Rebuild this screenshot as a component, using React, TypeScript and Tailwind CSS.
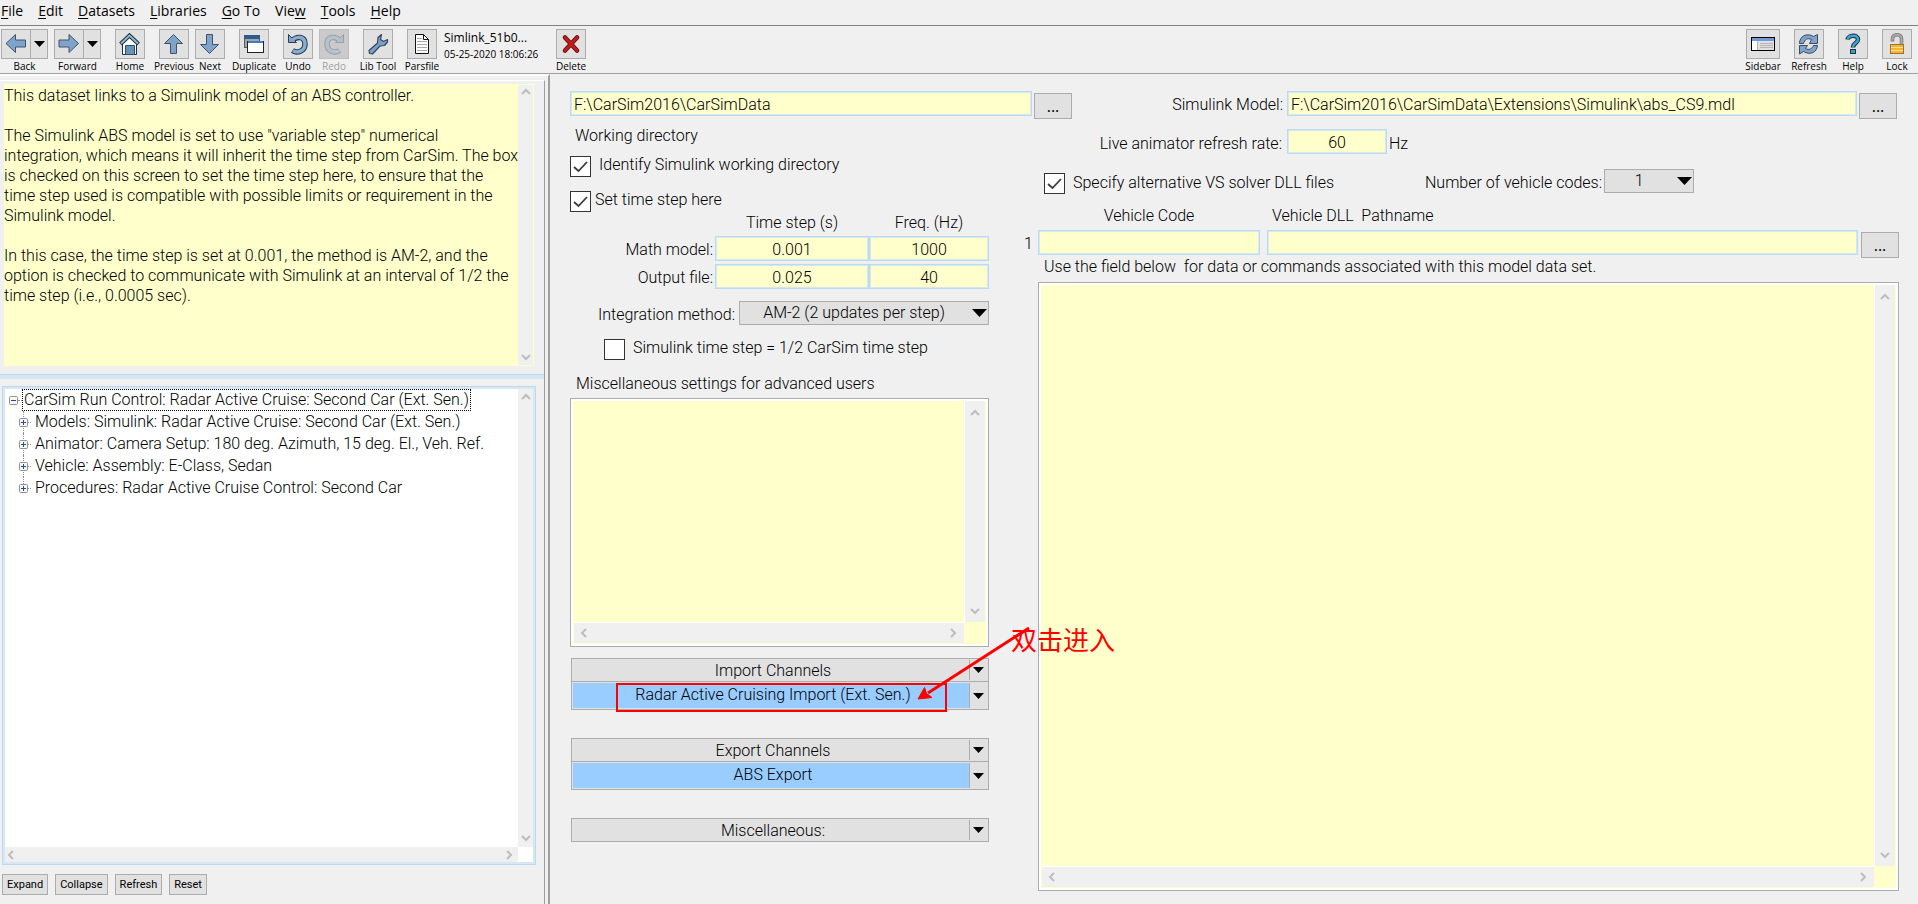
import React from "react";

const toolFont = "font-['Open_Sans','Noto_Sans',sans-serif]";

const blue = "#7ea4cb";
const ink = "#46506a";

type IconName =
  | "back" | "forward" | "home" | "previous" | "next" | "duplicate" | "undo" | "redo"
  | "wrench" | "page" | "delete" | "refresh" | "help" | "lock";

const icons: Record<IconName, React.ReactNode> = {
  back: <path d="M5 14.5 14.5 5.5V11H24.500V18H14.500V23.500Z" fill={blue} stroke={ink} />,
  forward: <path d="M24.500 14.500 15 5.500V11H5V18H15V23.500Z" fill={blue} stroke={ink} />,
  previous: <path d="M14.500 5.500 23.500 14.500H17.500V24.500H11.500V14.500H5.500Z" fill={blue} stroke={ink} />,
  next: <path d="M14.500 24.500 23.500 15.500H17.500V5.500H11.500V15.500H5.500Z" fill={blue} stroke={ink} />,
  home: (
    <>
      <path d="M7.500 13.500 15 6.500 21.500 13.500V25.500H7.500Z" fill="#fff" stroke="#20303c" />
      <path d="M10.500 16.500H19.500V25.500H10.500Z" fill="#6a92b8" stroke="#2d4d6c" />
      <path d="M5.500 15 14.500 6.500 23.500 15" fill="none" stroke="#20303c" strokeWidth="4" />
      <path d="M6 14.500 14.500 6.500 23 14.500" fill="none" stroke="#8fb7d4" strokeWidth="2" />
    </>
  ),
  duplicate: (
    <>
      <rect x="5.500" y="6.500" width="15" height="12" fill="#a5a5a5" stroke="#555b66" />
      <rect x="5" y="6" width="16" height="4" fill="#315b8c" />
      <rect x="8.500" y="12.500" width="16" height="11" fill="#fff" stroke="#222" />
      <rect x="9" y="12" width="15" height="2" fill="#3f79d6" />
    </>
  ),
  undo: (
    <>
      <path d="M10 11C13 7.500 22 6.500 22 15C22 22.500 14 24.500 9.500 21.500" fill="none" stroke="#2f3c4e" strokeWidth="5.500" />
      <path d="M5.500 5.500V13.500H13.500Z" fill={blue} stroke="#2f3c4e" />
      <path d="M9.500 11C13 7.500 22 6.500 22 15C22 22.500 14 24.200 10 21.800" fill="none" stroke="#86aed2" strokeWidth="3.400" />
    </>
  ),
  redo: (
    <>
      <path d="M20 11C17 7.500 8 6.500 8 15C8 22.500 16 24.500 20.500 21.500" fill="none" stroke="#9aa0a8" strokeWidth="5.500" />
      <path d="M24.500 5.500V13.500H16.500Z" fill="#b3bfca" stroke="#9aa0a8" />
      <path d="M20.500 11C17 7.500 8 6.500 8 15C8 22.500 16 24.200 20 21.800" fill="none" stroke="#b6c2cd" strokeWidth="3.400" />
    </>
  ),
  wrench: (
    <path
      d="M18.500 5.500 15 8.500 14.500 14 6 21.500 6.500 24.500 9.500 25 17 17 21.500 16.500 24.500 13 24.500 10.500 20.500 12.500 17.500 10.500Z"
      fill="#7aa0cc" stroke="#39455a" strokeWidth="1.200" strokeLinejoin="round"
    />
  ),
  page: (
    <>
      <path d="M8.500 5.500H16.500L21.500 10.500V24.500H8.500Z" fill="#fff" stroke="#111" />
      <path d="M16.500 5.500V10.500H21.500" fill="none" stroke="#111" />
      <path d="M10 12.500H20M10 15.500H20M10 18.500H20M10 21.500H20M10 9.500H15" stroke="#a8a8a8" />
    </>
  ),
  delete: (
    <>
      <path d="M9 8.500 21 21.500M21 8.500 9 21.500" stroke="#5a1212" strokeWidth="4.600" strokeLinecap="round" />
      <path d="M9 8.500 21 21.500M21 8.500 9 21.500" stroke="#c41a1a" strokeWidth="2.800" strokeLinecap="round" />
    </>
  ),
  refresh: (
    <>
      <path d="M5.500 14.500C5.500 7 13 3.500 19.500 7.500L23.500 5.500V14.500H15.500L17.500 10.500C13.500 8.500 10.500 10.500 9.500 14.500Z" fill={blue} stroke="#3d4b60" />
      <path d="M23.500 16.500C23 23.500 16 26.500 9.500 22.500L5.500 25V16.500H13.500L11.500 19.500C15 21.500 18 20 19.500 16.500Z" fill={blue} stroke="#3d4b60" />
    </>
  ),
  help: (
    <>
      <path d="M9.500 10.500C10 6 20 5 20 10.500C20 14 15 14 15 18.500" fill="none" stroke="#1f3442" strokeWidth="4.500" />
      <rect x="12.500" y="20.500" width="5" height="4" fill="#2fa0d0" stroke="#1f3442" />
      <path d="M9.700 10.500C10 6 20 5 20 10.500C20 14 15 14 15 18" fill="none" stroke="#36a7d8" strokeWidth="2.400" />
    </>
  ),
  lock: (
    <>
      <path d="M10.500 12.500V9.500C10.500 4.500 19.500 4.500 19.500 9.500V15" fill="none" stroke="#7c7c7c" strokeWidth="3.600" />
      <path d="M10.500 11.500V9.500C10.500 4.500 19.500 4.500 19.500 9.500V15" fill="none" stroke="#a8a8a8" strokeWidth="2" />
      <rect x="8.500" y="15.500" width="13" height="9" fill="#f7b433" stroke="#9b7430" />
      <path d="M9 18.500H21M9 21.500H21" stroke="#fde08a" />
    </>
  ),
};

function Icon({ name }: { name: IconName }) {
  return <svg viewBox="0 0 30 30" className="-m-px block size-[30px] shrink-0">{icons[name]}</svg>;
}

function Triangle({ className }: { className: string }) {
  return (
    <svg viewBox="0 0 14 8" preserveAspectRatio="none" className={className}>
      <path d="M0 0H14L7 8Z" fill="#000" />
    </svg>
  );
}

function Tool({ icon, label, disabled }: { icon: IconName; label: string; disabled?: boolean }) {
  return (
    <button disabled={disabled} className="flex w-[30px] flex-col items-center disabled:text-[#a0a0a0]">
      <span className={`size-[30px] border ${disabled ? "border-[#bdbdbd] bg-[#cacaca]" : "border-[#acacac] bg-[#e1e1e1]"}`}>
        <Icon name={icon} />
      </span>
      <span className="whitespace-nowrap text-[10px] leading-[14px]">{label}</span>
    </button>
  );
}

function SplitTool({ icon, label }: { icon: IconName; label: string }) {
  return (
    <div className="flex w-[47px] flex-col items-center">
      <div className="flex h-[30px] w-full border border-[#acacac] bg-[#e1e1e1]">
        <button aria-label={label} className="w-[29px] border-r border-[#acacac]"><Icon name={icon} /></button>
        <button aria-label={`${label} history`} className="flex flex-1 items-center justify-center">
          <Triangle className="h-[6px] w-[11px]" />
        </button>
      </div>
      <span className="text-[10px] leading-[14px]">{label}</span>
    </div>
  );
}

function Chevron({ dir }: { dir: "up" | "down" | "left" | "right" }) {
  const d = { up: "M1 6 5 2 9 6", down: "M1 3 5 7 9 3", left: "M6 1 2 5 6 9", right: "M3 1 7 5 3 9" }[dir];
  return (
    <svg viewBox="0 0 10 10" className="size-[10px] shrink-0">
      <path d={d} fill="none" stroke="#bdbdbd" strokeWidth="2" />
    </svg>
  );
}

function VBar({ className }: { className: string }) {
  return (
    <div className={`flex flex-col items-center justify-between bg-[#f0f0f0] ${className}`}>
      <Chevron dir="up" />
      <Chevron dir="down" />
    </div>
  );
}

function HBar({ className }: { className: string }) {
  return (
    <div className={`flex items-center justify-between bg-[#f0f0f0] ${className}`}>
      <Chevron dir="left" />
      <Chevron dir="right" />
    </div>
  );
}

function ScrollArea({ label, className }: { label: string; className: string }) {
  return (
    <div className={`border border-[#acacac] bg-white p-[2px] ${className}`}>
      <div className="grid h-full grid-cols-[1fr_22px] grid-rows-[1fr_22px] bg-[#ffffcc]">
        <textarea aria-label={label} className="resize-none overflow-hidden bg-[#ffffcc] px-1 outline-none" />
        <VBar className="mr-px border-l border-white pt-2 pb-[6px]" />
        <HBar className="mb-px ml-px border-t border-white px-[6px]" />
      </div>
    </div>
  );
}

function Field({ className, ...rest }: React.InputHTMLAttributes<HTMLInputElement>) {
  return (
    <input
      type="text"
      className={`h-[25px] min-w-0 border border-[#bbdaf3] bg-[#ffffcc] pt-px outline-none shadow-[inset_0_0_0_1px_#d7e7ee] ${className}`}
      {...rest}
    />
  );
}

function Browse({ label }: { label: string }) {
  return (
    <button aria-label={label} className={`mt-[2px] h-[26px] w-[38px] shrink-0 border border-[#acacac] bg-[#e1e1e1] text-[16px] leading-6 font-normal ${toolFont}`}>
      ...
    </button>
  );
}

function Check({ id, checked }: { id: string; checked?: boolean }) {
  return (
    <span className="relative block size-[21px] shrink-0">
      <input id={id} type="checkbox" defaultChecked={checked} className="peer block size-[21px] appearance-none border border-[#333] bg-white" />
      <svg viewBox="0 0 21 21" className="pointer-events-none absolute inset-0 hidden size-[21px] peer-checked:block">
        <path d="M4 11 8.500 15 17 6" fill="none" stroke="#3c3c3c" strokeWidth="1.800" />
      </svg>
    </span>
  );
}

function Select({ id, value, className }: { id: string; value: string; className: string }) {
  return (
    <div className={`relative ${className}`}>
      <select id={id} className="h-[24px] w-full appearance-none border border-[#acacac] bg-[#e1e1e1] pr-5 text-center [text-align-last:center]">
        <option>{value}</option>
      </select>
      <Triangle className="pointer-events-none absolute top-[8px] right-[2px] h-[8px] w-[15px]" />
    </div>
  );
}

function LinkRow({ label, linked }: { label: string; linked?: boolean }) {
  return (
    <div className={`flex bg-[#e1e1e1] p-px ${linked ? "h-[28px] border-t border-[#acacac]" : "h-[22px]"}`}>
      <button className={`flex-1 pl-1 ${linked ? "bg-[#99ccff] pb-[2px]" : "pt-px"}`}>{label}</button>
      <button aria-label={`${label} menu`} className="flex w-[18px] items-center justify-center border-l border-[#acacac]">
        <Triangle className="h-[6px] w-[11px]" />
      </button>
    </div>
  );
}

const menus = [
  ["", "F", "ile"], ["", "E", "dit"], ["", "D", "atasets"], ["", "L", "ibraries"],
  ["", "G", "o To"], ["Vie", "w", ""], ["", "T", "ools"], ["", "H", "elp"],
];

const notes = `This dataset links to a Simulink model of an ABS controller.

The Simulink ABS model is set to use "variable step" numerical
integration, which means it will inherit the time step from CarSim. The box
is checked on this screen to set the time step here, to ensure that the
time step used is compatible with possible limits or requirement in the
Simulink model.

In this case, the time step is set at 0.001, the method is AM-2, and the
option is checked to communicate with Simulink at an interval of 1/2 the
time step (i.e., 0.0005 sec).`;

const branches = [
  "Models: Simulink: Radar Active Cruise: Second Car (Ext. Sen.)",
  "Animator: Camera Setup: 180 deg. Azimuth, 15 deg. El., Veh. Ref.",
  "Vehicle: Assembly: E-Class, Sedan",
  "Procedures: Radar Active Cruise Control: Second Car",
];

function Expander({ open }: { open?: boolean }) {
  return (
    <svg viewBox="0 0 9 9" className="relative size-[9px] shrink-0">
      <rect x="0.500" y="0.500" width="8" height="8" rx="1" fill="#f6f6f6" stroke="#919191" />
      <path d={open ? "M2 4.500H7" : "M2 4.500H7M4.500 2V7"} stroke="#2b4a9b" />
    </svg>
  );
}

function Sidebar() {
  return (
    <aside className="flex w-[550px] shrink-0 flex-col border-t-2 border-r-2 border-t-[#fbfbfb] border-r-[#a0a0a0] pt-1">
      <div className="flex w-[545px] flex-1 flex-col border-t border-r border-t-white border-r-[#a0a0a0]">
        <div className="mt-[3px] ml-1 flex h-[282px] w-[530px] bg-[#ffffcc]">
          <textarea
            aria-label="Dataset notes" defaultValue={notes} wrap="off"
            className="flex-1 resize-none overflow-hidden pt-[2px] leading-5 whitespace-pre outline-none"
          />
          <VBar className="my-px mr-px w-[15px] py-[3px]" />
        </div>
        <div className="mt-2 h-[5px] border-t border-[#b9daf2] bg-[#d7e6f1]" />
        <div className="mt-[7px] ml-[2px] flex w-[534px] flex-1 flex-col border border-[#b9daf2] bg-[#d9e7f2] p-[2px]">
          <div className="grid flex-1 grid-cols-[1fr_15px] grid-rows-[1fr_15px] bg-white">
            <ul className="leading-[22px]">
              <li>
                <div className="flex items-center pl-1">
                  <Expander open />
                  <span className="w-1 border-t border-dotted border-[#909090]" />
                  <span className="h-[22px] border border-dotted border-black px-px leading-5">
                    CarSim Run Control: Radar Active Cruise: Second Car (Ext. Sen.)
                  </span>
                </div>
                <ul>
                  {branches.map((b) => (
                    <li key={b} className="group relative flex items-center pl-[14px]">
                      <span className="absolute top-0 left-[18px] h-full border-l border-dotted border-[#909090] group-last:h-1/2" />
                      <Expander />
                      <span className="mr-1 w-[3px] border-t border-dotted border-[#909090]" />
                      {b}
                    </li>
                  ))}
                </ul>
              </li>
            </ul>
            <VBar className="py-1" />
            <HBar className="pr-1 pl-[2px]" />
          </div>
        </div>
        <div className="mt-[9px] mb-[9px] ml-[2px] flex gap-[7px] text-[11px] font-normal">
          {["Expand", "Collapse", "Refresh", "Reset"].map((b) => (
            <button key={b} className="h-[21px] border border-[#acacac] bg-[#e1e1e1] px-1">{b}</button>
          ))}
        </div>
      </div>
    </aside>
  );
}

function Settings() {
  return (
    <section className="w-[419px] shrink-0 pt-[7px] leading-5">
      <p className="pl-[5px]">Working directory</p>
      <div className="mt-[10px] flex h-[21px] gap-2 leading-[18px]">
        <Check id="identify" checked />
        <label htmlFor="identify">Identify Simulink working directory</label>
      </div>
      <div className="mt-[14px] flex h-[21px] gap-1 leading-[18px]">
        <Check id="settime" checked />
        <label htmlFor="settime">Set time step here</label>
      </div>
      <table className="w-full table-fixed border-collapse">
        <colgroup><col className="w-[145px]" /><col className="w-[154px]" /><col /></colgroup>
        <thead>
          <tr>
            <td />
            <th className="pt-px pb-[3px] font-light">Time step (s)</th>
            <th className="pt-px pb-[3px] font-light">Freq. (Hz)</th>
          </tr>
        </thead>
        <tbody>
          {[["Math model:", "0.001", "1000"], ["Output file:", "0.025", "40"]].map(([name, step, freq]) => (
            <tr key={name} className="h-[28px] align-top">
              <th className="p-0 pt-1 pr-[2px] text-right font-light">{name}</th>
              <td className="p-0"><Field aria-label={`${name} time step`} defaultValue={step} className="block w-full text-center" /></td>
              <td className="p-0"><Field aria-label={`${name} frequency`} defaultValue={freq} className="block w-full text-center" /></td>
            </tr>
          ))}
        </tbody>
      </table>
      <div className="mt-[9px] flex gap-1">
        <label htmlFor="method" className="w-[165px] pt-1 text-right">Integration method:</label>
        <Select id="method" value="AM-2 (2 updates per step)" className="flex-1" />
      </div>
      <div className="mt-[14px] ml-[34px] flex h-[21px] gap-2 leading-[18px]">
        <Check id="halfstep" />
        <label htmlFor="halfstep">Simulink time step = 1/2 CarSim time step</label>
      </div>
      <p className="mt-[14px] pl-[6px]">Miscellaneous settings for advanced users</p>
      <ScrollArea label="Miscellaneous settings" className="mt-1 h-[249px]" />

      <div className="relative mt-[11px] ml-px border border-[#acacac]">
        <LinkRow label="Import Channels" />
        <LinkRow label="Radar Active Cruising Import (Ext. Sen.)" linked />
        <div className="pointer-events-none absolute top-[24px] left-[44px] h-[29px] w-[331px] border-2 border-[#ff0000]" />
        <svg viewBox="0 0 120 80" className="pointer-events-none absolute top-[-35px] left-[340px] z-10 h-[80px] w-[120px]">
          <path d="M117 4 16 69" stroke="#ff0000" strokeWidth="3" />
          <path d="M6 75 12.500 63.500 14.500 69.500 20 73.500Z" fill="#ff0000" stroke="#ff0000" />
        </svg>
        <p className="pointer-events-none absolute top-[-36px] left-[439px] z-10 text-[26px] leading-[32px] font-normal whitespace-nowrap text-[#ff0000] font-['Noto_Sans_CJK_SC',sans-serif]">
          双击进入
        </p>
      </div>
      <div className="mt-[28px] ml-px border border-[#acacac]">
        <LinkRow label="Export Channels" />
        <LinkRow label="ABS Export" linked />
      </div>
      <div className="mt-[28px] ml-px border border-[#acacac]">
        <LinkRow label="Miscellaneous:" />
      </div>
    </section>
  );
}

function Model() {
  return (
    <section className="flex flex-1 flex-col pt-[10px] pr-[19px] pb-[13px] pl-[29px] leading-5">
      <div className="flex">
        <label htmlFor="rate" className="w-[265px] pt-[5px] pr-px text-right">Live animator refresh rate:</label>
        <Field id="rate" defaultValue="60" className="mr-[2px] ml-1 w-[100px] text-center" />
        <span className="pt-[5px]">Hz</span>
      </div>
      <div className="mt-[15px] flex">
        <div className="ml-[26px] flex h-[25px] w-[381px] gap-2 pt-1 leading-5">
          <Check id="dll" checked />
          <label htmlFor="dll">Specify alternative VS solver DLL files</label>
        </div>
        <label htmlFor="codes" className="pt-1 pr-[2px]">Number of vehicle codes:</label>
        <Select id="codes" value="1" className="w-[90px]" />
      </div>
      <div className="mt-[12px] flex">
        <span className="ml-[20px] w-[222px] text-center">Vehicle Code</span>
        <span className="ml-[12px] whitespace-pre">Vehicle DLL  Pathname</span>
      </div>
      <div className="mt-1 flex">
        <span className="w-[20px] pt-1 pl-[6px]">1</span>
        <Field aria-label="Vehicle Code" className="w-[222px]" />
        <Field aria-label="Vehicle DLL Pathname" className="mr-[3px] ml-[7px] flex-1" />
        <Browse label="Browse for DLL" />
      </div>
      <p className="-mt-px pl-[26px] whitespace-pre">Use the field below  for data or commands associated with this model data set.</p>
      <ScrollArea label="Model data" className="mt-[5px] ml-[20px] flex-1" />
    </section>
  );
}

export default function App() {
  return (
    <div className="flex min-h-screen flex-col bg-[#f0f0f0] font-['Roboto','Liberation_Sans',sans-serif] text-[16px] leading-5 font-light text-black">
      <nav className={`flex h-[25px] items-start gap-[15px] pl-px text-[14px] leading-[22px] font-normal ${toolFont}`}>
        {menus.map(([a, key, b]) => (
          <button key={a + key + b}>{a}<span className="underline underline-offset-2">{key}</span>{b}</button>
        ))}
      </nav>
      <header className={`flex h-[49px] items-start justify-between border-t border-b border-t-[#808080] border-b-[#a0a0a0] pt-[3px] pr-[6px] pl-px font-normal ${toolFont}`}>
        <div className="flex gap-[14px]">
          <div className="flex gap-[6px]">
            <SplitTool icon="back" label="Back" />
            <SplitTool icon="forward" label="Forward" />
          </div>
          <Tool icon="home" label="Home" />
          <div className="flex gap-[6px]">
            <Tool icon="previous" label="Previous" />
            <Tool icon="next" label="Next" />
          </div>
          <Tool icon="duplicate" label="Duplicate" />
          <div className="flex gap-[6px]">
            <Tool icon="undo" label="Undo" />
            <Tool icon="redo" label="Redo" disabled />
          </div>
          <Tool icon="wrench" label="Lib Tool" />
          <div className="flex gap-[7px]">
            <Tool icon="page" label="Parsfile" />
            <div className="w-[98px] whitespace-nowrap">
              <p className="text-[12px] leading-[18px]">Simlink_51b0...</p>
              <p className="text-[10px] leading-[14px]">05-25-2020 18:06:26</p>
            </div>
          </div>
          <Tool icon="delete" label="Delete" />
        </div>
        <div className="flex gap-[14px]">
          <button className="flex w-[34px] flex-col items-center">
            <svg viewBox="0 0 32 28" className="block h-[30px] w-[34px] border border-[#acacac] bg-[#e1e1e1]">
              <rect x="4.500" y="7.500" width="23" height="13" fill="#e1e1e1" stroke="#000" />
              <rect x="5" y="8" width="22" height="3" fill="#6f9bd8" />
              <rect x="5" y="11" width="5" height="9" fill="#fff" />
              <path d="M10.500 11V20M13 13.500H26M13 15.500H26M13 17.500H26" stroke="#b4b4b4" />
            </svg>
            <span className="text-[10px] leading-[14px]">Sidebar</span>
          </button>
          <Tool icon="refresh" label="Refresh" />
          <Tool icon="help" label="Help" />
          <Tool icon="lock" label="Lock" />
        </div>
      </header>
      <div className="flex flex-1">
        <Sidebar />
        <main className="flex min-w-0 flex-1 flex-col pl-5">
          <div className="mt-[17px] flex items-start pr-[21px]">
            <Field aria-label="Working directory" defaultValue="F:\CarSim2016\CarSimData" className="mr-[2px] w-[462px] px-[3px]" />
            <Browse label="Browse for directory" />
            <label htmlFor="model" className="w-[213px] pt-1 pr-[2px] text-right">Simulink Model:</label>
            <Field id="model" defaultValue="F:\CarSim2016\CarSimData\Extensions\Simulink\abs_CS9.mdl" className="mr-[2px] ml-[2px] flex-1 px-[3px]" />
            <Browse label="Browse for model" />
          </div>
          <div className="flex flex-1">
            <Settings />
            <Model />
          </div>
        </main>
      </div>
    </div>
  );
}
